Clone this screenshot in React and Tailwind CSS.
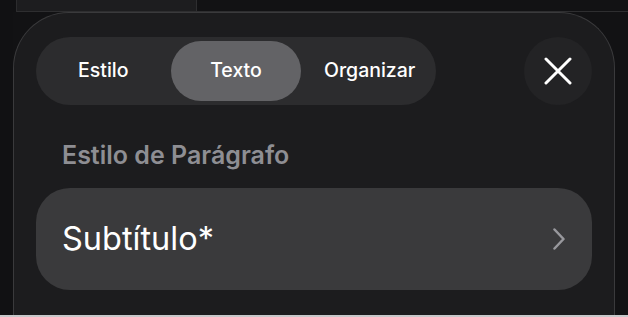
import React from "react";

export default function App() {
  const font = { fontFamily: "Inter, 'Noto Sans', sans-serif" };
  return (
    <div className="w-[628px] h-[317px] bg-[#121214] flex flex-col overflow-hidden" style={font}>
      <div className="h-[12px] flex shrink-0">
        <div className="w-[17px] bg-[#111113] border-r border-[#2c2c2e]" />
        <div className="w-[180px] bg-[#1d1d1f] border-r border-b border-[#2e2e30]" />
        <div className="flex-1 bg-[#121214] border-b border-[#2e2e30]" />
      </div>
      <div className="flex-1 flex min-h-0">
        <div className="w-[13px] bg-[#111113]" />
        <div className="w-[602px] bg-[#1c1c1e] border-l border-t border-r border-[#3a3a3c] rounded-t-[56px] flex flex-col px-[22px] pt-[24px]">
          <div className="flex items-center justify-between h-[68px]">
            <div className="w-[400px] h-[68px] rounded-full bg-[#2c2c2e] p-[4px] grid grid-cols-3 text-white text-[19.5px] font-medium">
              <div className="flex items-center justify-center pr-[4px]">Estilo</div>
              <div className="flex items-center justify-center rounded-full bg-[#636366]">Texto</div>
              <div className="flex items-center justify-center pl-[6px]">Organizar</div>
            </div>
            <div className="w-[68px] h-[68px] rounded-full bg-[#232325] flex items-center justify-center">
              <svg width="28" height="28" viewBox="0 0 28 28" fill="none" stroke="white" strokeWidth="3" strokeLinecap="round">
                <path d="M2 2 L26 26 M26 2 L2 26" />
              </svg>
            </div>
          </div>
          <div className="mt-[35px] pl-[26px] text-[25px] leading-[30px] font-semibold text-[#8e8e93]">
            Estilo de Parágrafo
          </div>
          <div className="mt-[18px] h-[102px] rounded-[34px] bg-[#3a3a3c] flex items-center justify-between pl-[26px] pr-[27px]">
            <span className="text-white text-[32.5px] leading-[40px]">Subtítulo*</span>
            <svg width="12" height="22" viewBox="0 0 12 22" fill="none" stroke="#98989d" strokeWidth="2.5" strokeLinecap="round" strokeLinejoin="round">
              <path d="M1.5 1.5 L10.5 11 L1.5 20.5" />
            </svg>
          </div>
        </div>
        <div className="flex-1 bg-[#121214]" />
      </div>
      <div className="h-[2px] bg-[#c8c8ca] shrink-0" />
    </div>
  );
}
